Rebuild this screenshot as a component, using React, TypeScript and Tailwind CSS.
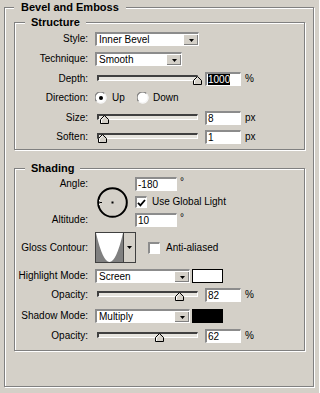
import type { ReactNode } from "react";

const sunken =
  "border-t-2 border-l-2 border-b border-r border-t-[#8c8c8c] border-l-[#8c8c8c] border-b-white border-r-white";

function GroupBox({
  title,
  className,
  titleClass,
  children,
}: {
  title: string;
  className: string;
  titleClass: string;
  children: ReactNode;
}) {
  return (
    <div
      className={`border border-[#808080] shadow-[inset_1px_1px_0_#fff,1px_1px_0_#fff] ${className}`}
    >
      <div
        className={`-mt-[8px] w-fit bg-[#d4d0c8] font-bold text-[11px] leading-[14px] ${titleClass}`}
      >
        {title}
      </div>
      {children}
    </div>
  );
}

function Label({ children }: { children: ReactNode }) {
  return <div className="w-[73px] shrink-0 text-right mr-[7px] whitespace-nowrap">{children}</div>;
}

function Arrow() {
  return (
    <svg width="5" height="3" viewBox="0 0 5 3">
      <path d="M0 0H5L2.5 3Z" fill="#000" />
    </svg>
  );
}

function Dropdown({ value, className }: { value: string; className: string }) {
  return (
    <div className={`flex h-[14px] bg-white ${sunken} ${className}`}>
      <span className="flex-1 pl-[2px] leading-[11px]">{value}</span>
      <span className="flex w-[15px] items-center justify-center border-t border-l border-t-white border-l-white bg-[#d4d0c8] shadow-[inset_-1px_-1px_0_#808080]">
        <Arrow />
      </span>
    </div>
  );
}

function Input({ value, className, selected }: { value: string; className: string; selected?: boolean }) {
  return (
    <div className={`h-[14px] bg-white ${sunken} ${className} pl-[1px] leading-[11px]`}>
      {selected ? <span className="bg-black text-white">{value}</span> : value}
    </div>
  );
}

function Slider({ pos }: { pos: number }) {
  return (
    <div className="relative h-[14px] w-[106px] shrink-0">
      <div className="ml-[2px] mt-[3px] h-[6px] w-[101px] border-t-2 border-l-2 border-b border-r border-t-[#404040] border-l-[#404040] border-b-white border-r-white bg-[#e6e4de]" />
      <svg
        className="absolute top-[4px]"
        style={{ left: 2 + pos - 4.5 }}
        width="9"
        height="9"
        viewBox="0 0 9 9"
      >
        <path d="M4.5 0.5L8.5 4.5V8.5H0.5V4.5Z" fill="#d4d0c8" stroke="#000" />
        <path d="M1.5 8V4.9L4.5 1.9" fill="none" stroke="#fff" />
      </svg>
    </div>
  );
}

function SliderRow({ label, pos, value, unit, selected, h }: { label: string; pos: number; value: string; unit: string; selected?: boolean; h: string }) {
  return (
    <div className={`flex items-center ${h}`}>
      <Label>{label}</Label>
      <Slider pos={pos} />
      <Input value={value} className="ml-[4px] w-[36px]" selected={selected} />
      <span className="ml-[4px]">{unit}</span>
    </div>
  );
}

function Radio({ checked }: { checked?: boolean }) {
  return (
    <svg width="12" height="12" viewBox="0 0 12 12">
      <circle cx="6" cy="6" r="5.5" fill="#fff" />
      <path d="M1.6 9.4A5.3 5.3 0 0 1 9.4 1.6" fill="none" stroke="#808080" strokeWidth="1.2" />
      <path d="M9.4 1.6A5.3 5.3 0 0 1 1.6 9.4" fill="none" stroke="#f4f4f4" strokeWidth="1.2" />
      {checked && <circle cx="6" cy="6" r="2" fill="#000" />}
    </svg>
  );
}

function Checkbox({ checked }: { checked?: boolean }) {
  return (
    <div className={`flex h-[12px] w-[12px] items-center justify-center bg-white ${sunken}`}>
      {checked && (
        <svg width="9" height="8" viewBox="0 0 9 8">
          <path d="M1 3.8L3.4 6.3L8 1" fill="none" stroke="#000" strokeWidth="1.8" />
        </svg>
      )}
    </div>
  );
}

function Degree() {
  return <span className="ml-[3px] self-start leading-[10px]">°</span>;
}

export default function App() {
  return (
    <div className="h-[393px] w-[319px] overflow-hidden bg-[#d4d0c8] pt-[7px] pl-[4px] font-['Liberation_Sans',Arial,sans-serif] text-[10px] leading-[12px] text-black">
      <GroupBox title="Bevel and Emboss" className="h-[380px] w-[310px]" titleClass="ml-[9px] px-[7px]">
        {/* Structure */}
        <GroupBox title="Structure" className="ml-[9px] mt-[8px] w-[291px] pb-[3px]" titleClass="ml-[10px] px-[6px]">
          <div className="flex h-[20px] items-center">
            <Label>Style:</Label>
            <Dropdown value="Inner Bevel" className="w-[104px]" />
          </div>
          <div className="flex h-[20px] items-center">
            <Label>Technique:</Label>
            <Dropdown value="Smooth" className="w-[87px]" />
          </div>
          <SliderRow label="Depth:" pos={100.5} value="1000" unit="%" selected h="h-[19px]" />
          <div className="flex h-[20px] items-center">
            <Label>Direction:</Label>
            <div className="flex w-[42px] items-center gap-[5px]">
              <Radio checked />
              <span>Up</span>
            </div>
            <div className="flex items-center gap-[4px]">
              <Radio />
              <span>Down</span>
            </div>
          </div>
          <SliderRow label="Size:" pos={7.5} value="8" unit="px" h="h-[19px]" />
          <SliderRow label="Soften:" pos={5} value="1" unit="px" h="h-[19px]" />
        </GroupBox>

        {/* Shading */}
        <GroupBox title="Shading" className="ml-[9px] mt-[18px] w-[291px] pb-[7px]" titleClass="ml-[10px] px-[6px]">
          <div className="mt-[2px] flex">
            <div className="mr-[7px] flex h-[50px] w-[73px] flex-col justify-between text-right leading-[14px]">
              <span>Angle:</span>
              <span>Altitude:</span>
            </div>
            <svg className="ml-[2px] mt-[10px]" width="31" height="31" viewBox="0 0 31 31">
              <circle cx="15.5" cy="15.5" r="14.3" fill="none" stroke="#000" strokeWidth="2" />
              <rect x="14.5" y="14.5" width="2" height="2" fill="#000" />
              <path d="M2.5 15.5H5" stroke="#000" strokeWidth="1" />
              <rect x="2" y="13" width="1" height="1" fill="#fff" />
              <rect x="2" y="17" width="1" height="1" fill="#fff" />
            </svg>
            <div className="ml-[7px] flex flex-col">
              <div className="flex">
                <Input value="-180" className="w-[42px]" />
                <Degree />
              </div>
              <div className="mt-[5px] flex h-[12px] items-center gap-[5px]">
                <Checkbox checked />
                <span>Use Global Light</span>
              </div>
              <div className="mt-[5px] flex">
                <Input value="10" className="w-[42px]" />
                <Degree />
              </div>
            </div>
          </div>

          <div className="mt-[5px] flex h-[31px] items-center">
            <Label>Gloss Contour:</Label>
            <div className="flex h-[31px] w-[41px] border border-[#404040] bg-white">
              <svg width="27" height="29" viewBox="0 0 27 29">
                <path d="M0 29V0Q13.5 58 27 0V29Z" fill="#808080" />
              </svg>
              <div className="flex flex-1 items-center justify-center border-l border-l-[#404040] bg-[#d4d0c8]">
                <Arrow />
              </div>
            </div>
            <div className="ml-[12px] flex items-center gap-[6px]">
              <Checkbox />
              <span>Anti-aliased</span>
            </div>
          </div>

          <div className="mt-[6px] flex h-[14px] items-center">
            <Label>Highlight Mode:</Label>
            <Dropdown value="Screen" className="w-[95px]" />
            <div className="ml-[2px] h-[14px] w-[31px] border border-black bg-white" />
          </div>
          <div className="mt-[5px]">
            <SliderRow label="Opacity:" pos={82.5} value="82" unit="%" h="h-[14px]" />
          </div>
          <div className="mt-[7px] flex h-[14px] items-center">
            <Label>Shadow Mode:</Label>
            <Dropdown value="Multiply" className="w-[95px]" />
            <div className="ml-[2px] h-[14px] w-[31px] border border-black bg-black" />
          </div>
          <div className="mt-[6px]">
            <SliderRow label="Opacity:" pos={62.5} value="62" unit="%" h="h-[14px]" />
          </div>
        </GroupBox>
      </GroupBox>
    </div>
  );
}
